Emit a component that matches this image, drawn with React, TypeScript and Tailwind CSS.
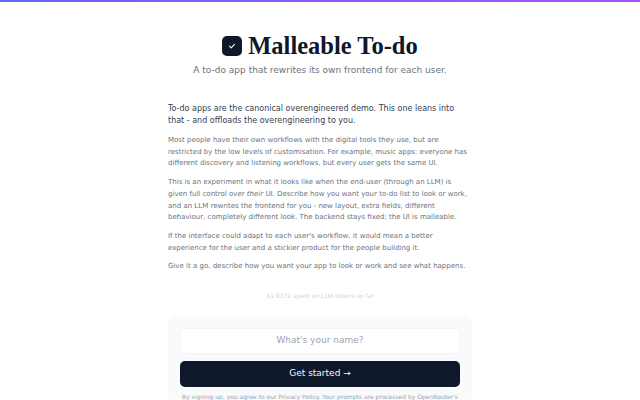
import React from 'react';

const BODY = [
  <>Most people have their own workflows with the digital tools they use, but are restricted by the low levels of customisation. For example, music apps: everyone has different discovery and listening workflows, but every user gets the same UI.</>,
  <>This is an experiment in what it looks like when the end-user (through an LLM) is given full control over <em>their</em> UI. Describe how you want your to-do list to look or work, and an LLM rewrites the frontend for you - new layout, extra fields, different behaviour, completely different look. The backend stays fixed; the UI is malleable.</>,
  <>If the interface could adapt to each user's workflow, it would mean a better experience for the user and a stickier product for the people building it.</>,
  <>Give it a go, describe how you want your app to look or work and see what happens.</>,
];

export default function App() {
  return (
    <div className="h-[400px] overflow-hidden bg-white font-['DejaVu_Sans',sans-serif]">
      <div className="h-[2px] bg-gradient-to-r from-[#6366f1] via-[#8b5cf6] to-[#a855f7]" />
      <div className="mx-auto w-[304px] pt-[29px]">
        <header className="flex flex-col items-center">
          <div className="flex items-center gap-[6px]">
            <span className="flex h-[20px] w-[20px] items-center justify-center rounded-[5px] bg-[#0f172a]">
              <svg width="10" height="10" viewBox="0 0 24 24" fill="none" stroke="white" strokeWidth="2.6" strokeLinecap="round" strokeLinejoin="round">
                <path d="M6 12.5l4 4L18 8" />
              </svg>
            </span>
            <h1 className="font-['Liberation_Serif',serif] text-[24.5px] font-bold leading-[30px] text-[#0f172a]">Malleable To-do</h1>
          </div>
          <p className="mt-[2px] text-[9px] leading-[14px] text-[#6b7280]">A to-do app that rewrites its own frontend for each user.</p>
        </header>

        <p className="mt-[26px] text-[8px] leading-[12px] text-[#374151]">
          To-do apps are the canonical overengineered demo. This one leans into that - and offloads the overengineering to you.
        </p>
        <div className="mt-[8px] flex flex-col gap-[7px] text-[7px] leading-[11.7px] text-[#6b7280]">
          {BODY.map((p, i) => <p key={i}>{p}</p>)}
        </div>

        <p className="mt-[18px] text-center text-[6px] leading-[10px] text-[#d1d5db]">$1.9372 spent on LLM tokens so far</p>

        <div className="mt-[15px] rounded-[8px] bg-[#f8fafc] px-[12px] pt-[12px]">
          <div className="flex h-[26px] items-center justify-center rounded-[5px] border border-[#f1f5f9] bg-white text-[9px] text-[#9ca3af]">What's your name?</div>
          <button className="mt-[7px] flex h-[26px] w-full items-center justify-center rounded-[5px] bg-[#0f172a] text-[9px] text-[#f8fafc]">Get started →</button>
          <p className="mt-[5px] whitespace-nowrap text-center text-[6px] leading-[10px] text-[#9ca3af]">
            By signing up, you agree to our <span className="underline">Privacy Policy</span>. Your prompts are processed by OpenRouter's
          </p>
        </div>
      </div>
    </div>
  );
}
